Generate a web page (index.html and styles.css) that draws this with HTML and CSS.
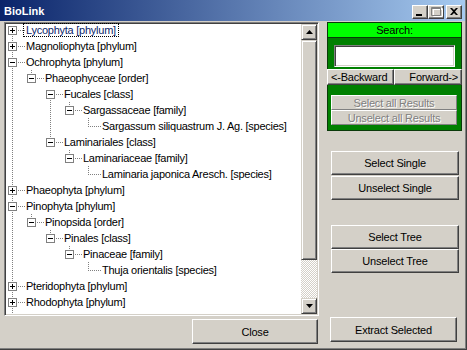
FILE: index.html
```html
<!DOCTYPE html>
<html>
<head>
<meta charset="utf-8">
<title>BioLink</title>
<link rel="stylesheet" href="styles.css">
</head>
<body>
<div class="window">
  <div class="titlebar">
    <span class="title">BioLink</span>
    <div class="caps">
      <span class="cap"><svg width="14" height="12" viewBox="0 0 14 12"><rect x="3" y="8" width="6" height="2" fill="#000"/></svg></span>
      <span class="cap"><svg width="14" height="12" viewBox="0 0 14 12"><path d="M3.5 1.5h9v8h-9z M4 2.5h8" fill="none" stroke="#fff" transform="translate(1 1)"/><path d="M2.5 1.5h9v8h-9z M3 2.5h8" fill="none" stroke="#808080"/></svg></span>
      <span class="cap cap-close"><svg width="14" height="12" viewBox="0 0 14 12"><path d="M3 2l2 0 2 2 2-2 2 0 -3 3.5 3 3.5 -2 0 -2-2 -2 2 -2 0 3-3.5z" fill="#000"/></svg></span>
    </div>
  </div>
  <div class="client">
    <div class="leftcol">
      <div class="tree">
        <div class="items">
          <div class="row"><span class="c c-start"><span class="box plus"></span></span><span class="lbl sel">Lycophyta [phylum]</span></div>
          <div class="row"><span class="c c-tee"><span class="box plus"></span></span><span class="lbl">Magnoliophyta [phylum]</span></div>
          <div class="row"><span class="c c-tee"><span class="box minus"></span></span><span class="lbl">Ochrophyta [phylum]</span></div>
          <div class="row"><span class="c c-vert"></span><span class="c c-end"><span class="box minus"></span></span><span class="lbl">Phaeophyceae [order]</span></div>
          <div class="row"><span class="c c-vert"></span><span class="c"></span><span class="c c-start"><span class="box minus"></span></span><span class="lbl">Fucales [class]</span></div>
          <div class="row"><span class="c c-vert"></span><span class="c"></span><span class="c c-vert"></span><span class="c c-end"><span class="box minus"></span></span><span class="lbl">Sargassaceae [family]</span></div>
          <div class="row"><span class="c c-vert"></span><span class="c"></span><span class="c c-vert"></span><span class="c"></span><span class="c c-end"></span><span class="lbl">Sargassum siliquastrum J. Ag. [species]</span></div>
          <div class="row"><span class="c c-vert"></span><span class="c"></span><span class="c c-end"><span class="box minus"></span></span><span class="lbl">Laminariales [class]</span></div>
          <div class="row"><span class="c c-vert"></span><span class="c"></span><span class="c"></span><span class="c c-end"><span class="box minus"></span></span><span class="lbl">Laminariaceae [family]</span></div>
          <div class="row"><span class="c c-vert"></span><span class="c"></span><span class="c"></span><span class="c"></span><span class="c c-end"></span><span class="lbl">Laminaria japonica Aresch. [species]</span></div>
          <div class="row"><span class="c c-tee"><span class="box plus"></span></span><span class="lbl">Phaeophyta [phylum]</span></div>
          <div class="row"><span class="c c-tee"><span class="box minus"></span></span><span class="lbl">Pinophyta [phylum]</span></div>
          <div class="row"><span class="c c-vert"></span><span class="c c-end"><span class="box minus"></span></span><span class="lbl">Pinopsida [order]</span></div>
          <div class="row"><span class="c c-vert"></span><span class="c"></span><span class="c c-end"><span class="box minus"></span></span><span class="lbl">Pinales [class]</span></div>
          <div class="row"><span class="c c-vert"></span><span class="c"></span><span class="c"></span><span class="c c-end"><span class="box minus"></span></span><span class="lbl">Pinaceae [family]</span></div>
          <div class="row"><span class="c c-vert"></span><span class="c"></span><span class="c"></span><span class="c"></span><span class="c c-end"></span><span class="lbl">Thuja orientalis [species]</span></div>
          <div class="row"><span class="c c-tee"><span class="box plus"></span></span><span class="lbl">Pteridophyta [phylum]</span></div>
          <div class="row"><span class="c c-tee"><span class="box plus"></span></span><span class="lbl">Rhodophyta [phylum]</span></div>
          <div class="row"><span class="c c-vert"></span></div>
        </div>
        <div class="vscroll">
          <div class="sbtn"><svg width="7" height="4" viewBox="0 0 7 4"><path d="M3.5 0L7 4H0z" fill="#000"/></svg></div>
          <div class="thumb"></div>
          <div class="track"></div>
          <div class="sbtn"><svg width="7" height="4" viewBox="0 0 7 4"><path d="M0 0h7L3.5 4z" fill="#000"/></svg></div>
        </div>
      </div>
      <div class="foot">
        <div class="btn close-btn">Close</div>
      </div>
    </div>
    <div class="rightcol">
      <div class="search">
        <div class="search-head">Search:</div>
        <div class="search-input"></div>
        <div class="nav">
          <div class="btn nav-btn back">&lt;-Backward</div>
          <div class="btn nav-btn fwd">Forward-&gt;</div>
        </div>
        <div class="results">
          <div class="btn dis">Select all Results</div>
          <div class="btn dis">Unselect all Results</div>
        </div>
      </div>
      <div class="pair pair-single">
        <div class="btn big">Select Single</div>
        <div class="btn big">Unselect Single</div>
      </div>
      <div class="pair pair-tree">
        <div class="btn big">Select Tree</div>
        <div class="btn big">Unselect Tree</div>
      </div>
      <div class="spacer"></div>
      <div class="btn extract">Extract Selected</div>
    </div>
  </div>
</div>
</body>
</html>
```

FILE: styles.css
```css
* { box-sizing: border-box; }

body {
  margin: 0;
  background: #d4d0c8;
  font-family: "Liberation Sans", Arial, sans-serif;
  font-size: 11px;
  letter-spacing: -0.2px;
  color: #000;
}

.window {
  width: 467px;
  height: 350px;
  display: flex;
  flex-direction: column;
  background: #d4d0c8;
  padding: 0 2px 2px 0;
  box-shadow: inset -1px -1px #404040, inset -2px -2px #808080;
  overflow: hidden;
}

/* ---------- title bar ---------- */
.titlebar {
  height: 21px;
  flex: none;
  display: flex;
  align-items: flex-start;
  background: linear-gradient(to right, #0a246a, #a6caf0);
  padding: 5px 3px 0 4px;
}

.title {
  flex: 1;
  color: #fff;
  font-weight: bold;
  font-size: 11px;
  letter-spacing: 0;
  line-height: 13px;
}

.caps {
  display: flex;
}

.cap {
  width: 16px;
  height: 14px;
  background: #d4d0c8;
  border: 1px solid;
  border-color: #fff #404040 #404040 #fff;
  box-shadow: inset -1px -1px #808080;
  display: flex;
  align-items: center;
  justify-content: center;
}

.cap-close {
  margin-left: 2px;
}

.cap svg { display: block; }

/* ---------- client ---------- */
.client {
  flex: 1;
  display: flex;
  padding: 1px 0 0 4px;
  gap: 8px;
}

.leftcol {
  width: 315px;
  display: flex;
  flex-direction: column;
}

.tree {
  height: 294px;
  display: flex;
  background: #fff;
  border: 1px solid;
  border-color: #808080 #fff #fff #808080;
  box-shadow: inset 1px 1px #404040, inset -1px -1px #d4d0c8;
  padding: 1px;
}

.items {
  flex: 1;
  overflow: hidden;
  margin-top: -2px;
}

.row {
  height: 16px;
  display: flex;
  align-items: center;
  white-space: nowrap;
}

.c {
  width: 19px;
  height: 16px;
  flex: none;
  padding: 4px 0 0 2px;
  background-repeat: no-repeat;
}

.c-vert {
  background-image: repeating-linear-gradient(to bottom, #808080 0 1px, transparent 1px 2px);
  background-size: 1px 16px;
  background-position: 6px 0;
}

.c-tee {
  background-image:
    repeating-linear-gradient(to bottom, #808080 0 1px, transparent 1px 2px),
    repeating-linear-gradient(to right, #808080 0 1px, transparent 1px 2px);
  background-size: 1px 16px, 11px 1px;
  background-position: 6px 0, 8px 8px;
}

.c-end {
  background-image:
    repeating-linear-gradient(to bottom, #808080 0 1px, transparent 1px 2px),
    repeating-linear-gradient(to right, #808080 0 1px, transparent 1px 2px);
  background-size: 1px 9px, 11px 1px;
  background-position: 6px 0, 8px 8px;
}

.c-start {
  background-image:
    repeating-linear-gradient(to bottom, #808080 0 1px, transparent 1px 2px),
    repeating-linear-gradient(to right, #808080 0 1px, transparent 1px 2px);
  background-size: 1px 8px, 11px 1px;
  background-position: 6px 8px, 8px 8px;
}

.box {
  display: block;
  width: 9px;
  height: 9px;
  border: 1px solid #808080;
  background-color: #fff;
  background-repeat: no-repeat;
}

.box.minus {
  background-image: linear-gradient(#000, #000);
  background-size: 5px 1px;
  background-position: 1px 3px;
}

.box.plus {
  background-image: linear-gradient(#000, #000), linear-gradient(#000, #000);
  background-size: 5px 1px, 1px 5px;
  background-position: 1px 3px, 3px 1px;
}

.lbl {
  height: 14px;
  line-height: 12px;
  margin-left: -2px;
  padding: 0 2px;
  border: 1px solid transparent;
  letter-spacing: -0.25px;
}

.lbl.sel {
  border: 1px dotted #000;
  color: #0a246a;
}

/* ---------- scrollbar ---------- */
.vscroll {
  width: 16px;
  flex: none;
  display: flex;
  flex-direction: column;
}

.sbtn, .thumb {
  background: #d4d0c8;
  border: 1px solid;
  border-color: #d4d0c8 #404040 #404040 #d4d0c8;
  box-shadow: inset 1px 1px #fff, inset -1px -1px #808080;
}

.sbtn {
  height: 16px;
  flex: none;
  display: flex;
  align-items: center;
  justify-content: center;
}

.sbtn svg { display: block; }

.thumb {
  height: 220px;
  flex: none;
}

.track {
  flex: 1;
  background: repeating-conic-gradient(#fff 0 25%, #d4d0c8 0 50%) 0 0 / 2px 2px;
}

/* ---------- buttons ---------- */
.btn {
  background: #d4d0c8;
  border: 1px solid;
  border-color: #fff #404040 #404040 #fff;
  box-shadow: inset -1px -1px #808080;
  display: flex;
  align-items: center;
  justify-content: center;
  white-space: nowrap;
}

.foot {
  display: flex;
  justify-content: flex-end;
  padding: 3px 1px 0 0;
}

.close-btn {
  width: 126px;
  height: 25px;
}

/* ---------- right column ---------- */
.rightcol {
  width: 136px;
  display: flex;
  flex-direction: column;
}

.search {
  width: 135px;
  height: 109px;
  flex: none;
  background: #008000;
  border: 1px solid #0a3a0a;
  display: flex;
  flex-direction: column;
}

.search-head {
  height: 16px;
  margin: -1px -1px 0;
  background: #00ff00;
  border: 1px solid #0a3a0a;
  text-align: center;
  line-height: 14px;
}

.search-input {
  width: 121px;
  height: 22px;
  margin: 7px 0 0 6px;
  background: #fff;
  border: 1px solid;
  border-color: #808080 #fff #fff #808080;
  box-shadow: inset 1px 1px #404040, inset -1px -1px #d4d0c8;
}

.nav {
  display: flex;
  margin: 2px -1px 0;
}

.nav-btn {
  height: 16px;
}

.back {
  width: 67px;
  justify-content: flex-start;
  padding-left: 3px;
}

.fwd {
  width: 68px;
  justify-content: flex-end;
  padding-right: 3px;
}

.results {
  margin: 10px 0 0 3px;
  width: 126px;
  display: flex;
  flex-direction: column;
}

.btn.dis {
  height: 15px;
  color: #808080;
  text-shadow: 1px 1px #fff;
  border-color: #fff #808080 #808080 #fff;
  box-shadow: none;
}

.pair {
  margin-left: 4px;
  width: 128px;
  display: flex;
  flex-direction: column;
}

.pair-single {
  margin-top: 20px;
  gap: 1px;
}

.pair-tree {
  margin-top: 25px;
}

.btn.big {
  height: 24px;
}

.spacer { flex: 1; }

.extract {
  margin: 0 0 6px 3px;
  width: 127px;
  height: 25px;
}
```
